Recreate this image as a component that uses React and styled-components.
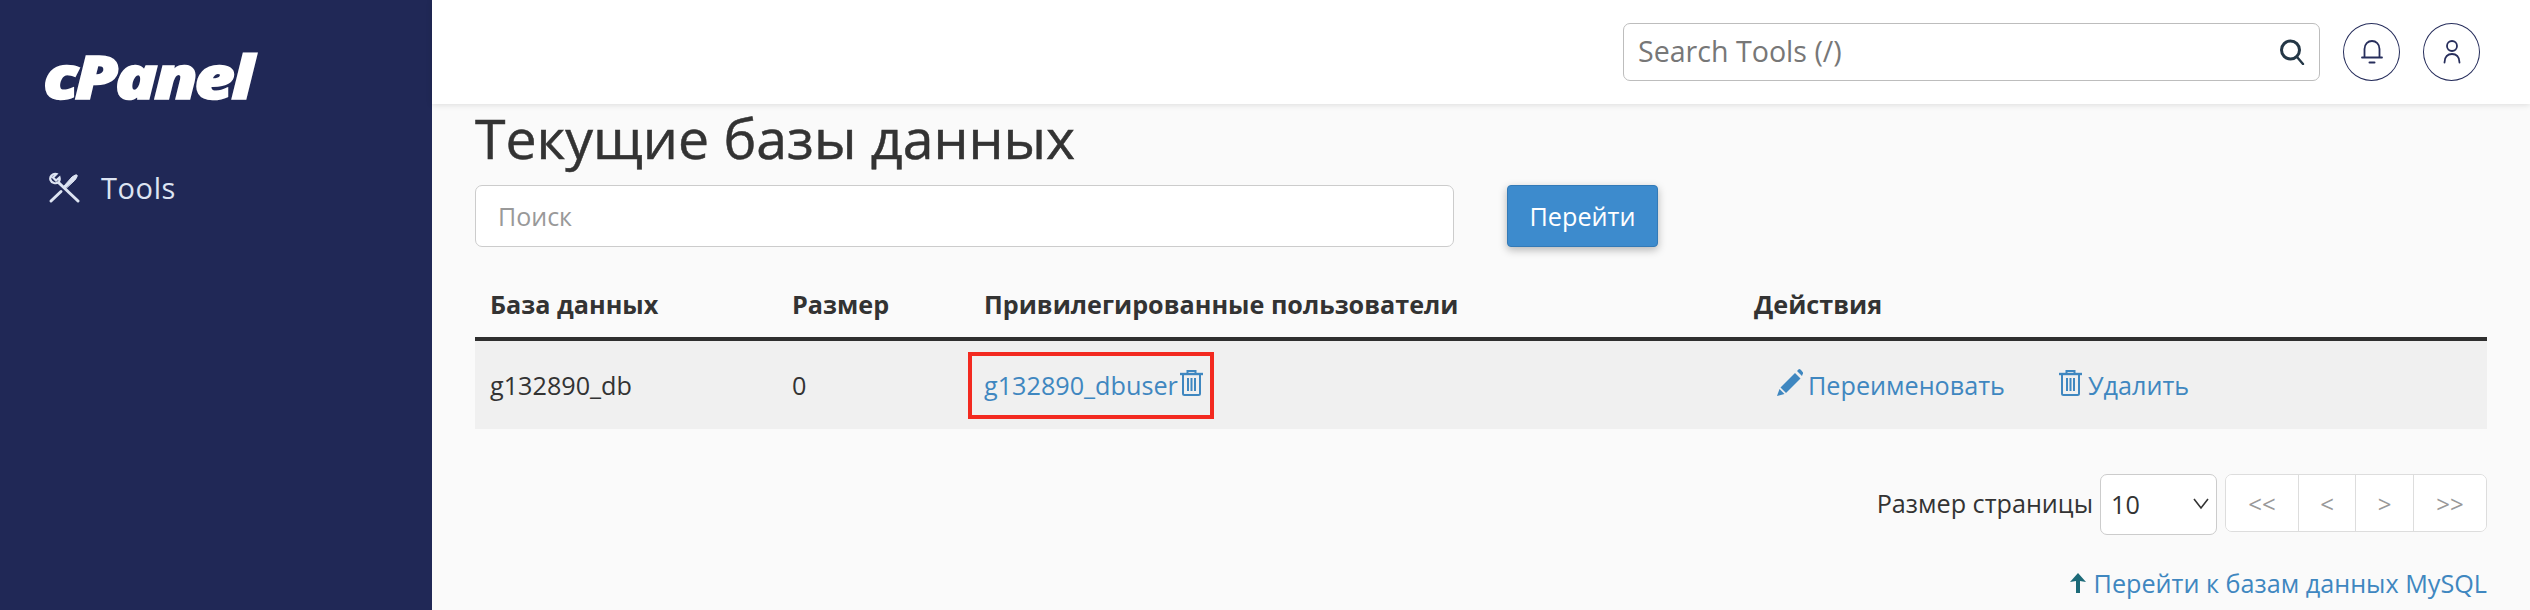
import styled, { createGlobalStyle } from "styled-components";

const GlobalStyle = createGlobalStyle`
  html, body {
    margin: 0;
    padding: 0;
    height: 100%;
    background: #fafafa;
    overflow: hidden;
  }
  body {
    font-family: "Open Sans", "Noto Sans", sans-serif;
    color: #333;
  }
  * { box-sizing: border-box; }
`;

const Page = styled.div`
  display: flex;
  width: 2530px;
  height: 610px;
  overflow: hidden;
`;

const Sidebar = styled.aside`
  flex: 0 0 432px;
  background: #202856;
  display: flex;
  flex-direction: column;
  padding: 43px 0 0 43px;
`;

const Logo = styled.div`
  font-family: "Open Sans", sans-serif;
  font-size: 60px;
  line-height: 66px;
  font-weight: 800;
  font-style: italic;
  letter-spacing: -3px;
  color: #fff;
  -webkit-text-stroke: 1.5px #fff;
  transform: scaleX(1.17);
  transform-origin: left center;
`;

const NavItem = styled.a`
  display: flex;
  align-items: center;
  gap: 21px;
  margin: 59px 0 0 5px;
  color: #dde4f2;
  font-size: 29px;
  line-height: 40px;
  letter-spacing: 0.6px;
`;

const Main = styled.main`
  flex: 1;
  min-width: 0;
  display: flex;
  flex-direction: column;
`;

const Topbar = styled.header`
  flex: 0 0 104px;
  background: #fff;
  box-shadow: 0 1px 6px rgba(0, 0, 0, 0.12);
  display: flex;
  align-items: center;
  justify-content: flex-end;
  gap: 23px;
  padding: 0 50px 0 0;
  position: relative;
`;

const ToolSearch = styled.div`
  width: 697px;
  height: 58px;
  border: 1px solid #bdbdbd;
  border-radius: 7px;
  background: #fff;
  display: flex;
  align-items: center;
  padding: 0 14px 0 14px;
`;

const ToolInput = styled.input`
  flex: 1;
  min-width: 0;
  border: 0;
  outline: 0;
  background: transparent;
  font-family: inherit;
  font-size: 28.6px;
  padding: 0 0 4px;
  color: #333;
  &::placeholder { color: #777; opacity: 1; }
`;

const RoundButton = styled.button`
  width: 57px;
  height: 58px;
  border: 1.5px solid #272e5c;
  border-radius: 50%;
  background: #fff;
  padding: 0;
  display: flex;
  align-items: center;
  justify-content: center;
`;

const Content = styled.div`
  flex: 1;
  padding: 0 43px;
  min-height: 0;
`;

const Title = styled.h1`
  margin: -2px 0 0;
  font-size: 55.4px;
  line-height: 72px;
  font-weight: 400;
  color: #333;
  -webkit-text-stroke: 0.5px #333;
`;

const SearchRow = styled.div`
  display: flex;
  gap: 53px;
  margin-top: 11px;
`;

const SearchInput = styled.input`
  width: 979px;
  height: 62px;
  border: 1px solid #ccc;
  border-radius: 7px;
  background: #fff;
  outline: 0;
  padding: 0 22px;
  font-family: inherit;
  font-size: 25px;
  &::placeholder { color: #999; opacity: 1; }
`;

const GoButton = styled.button`
  width: 151px;
  height: 62px;
  border: 1px solid #337ab7;
  border-radius: 4px;
  background: #3d8bcd;
  box-shadow: 0 3px 8px rgba(0, 0, 0, 0.28);
  color: #fff;
  font-family: inherit;
  font-size: 25.2px;
`;

const Table = styled.table`
  width: 2012px;
  margin-top: 24px;
  border-collapse: collapse;
  table-layout: fixed;
  font-size: 25.2px;
`;

const HeadCell = styled.th`
  width: ${(p) => p.$w}px;
  height: 68px;
  padding: 0 15px;
  text-align: left;
  font-weight: 700;
  color: #333;
  border-bottom: 4px solid #2f2f2f;
`;

const Row = styled.tr`
  background: #f0f0f0;
`;

const Cell = styled.td`
  height: 90px;
  padding: 0 15px;
  color: #333;
`;

const UserCell = styled(Cell)`
  padding: 0;
`;

const HighlightBox = styled.div`
  display: inline-flex;
  align-items: center;
  width: 246px;
  height: 67px;
  margin-left: -1px;
  padding-left: 12px;
  border: 4px solid #f32a20;
`;

const Link = styled.a`
  display: inline-flex;
  align-items: center;
  color: #3f87c0;
  white-space: nowrap;
  gap: ${(p) => p.$gap || 0}px;
`;

const Actions = styled.div`
  display: flex;
  align-items: center;
  gap: 54px;
  padding-left: 23px;
`;

const Pager = styled.div`
  display: flex;
  align-items: flex-start;
  justify-content: flex-end;
  margin-top: 45px;
  font-size: 25.2px;
`;

const PagerLabel = styled.span`
  line-height: 58px;
  margin-right: 7px;
  color: #333;
`;

const SelectWrap = styled.div`
  position: relative;
  margin-right: 8px;
`;

const PageSelect = styled.select`
  appearance: none;
  width: 117px;
  height: 61px;
  border: 1px solid #ccc;
  border-radius: 7px;
  background: #fff;
  padding: 0 10px 2px;
  font-family: inherit;
  font-size: 25.2px;
  color: #333;
`;

const Caret = styled.svg`
  position: absolute;
  right: 7px;
  top: 24px;
  pointer-events: none;
`;

const PageGroup = styled.div`
  display: flex;
  height: 58px;
  border: 1px solid #ddd;
  border-radius: 7px;
  overflow: hidden;
  background: #fff;
`;

const PageButton = styled.button`
  width: ${(p) => p.$w}px;
  height: 100%;
  border: 0;
  border-left: ${(p) => (p.$first ? "0" : "1px solid #ddd")};
  background: #fff;
  color: #999;
  font-family: inherit;
  font-size: 24px;
  padding: 0;
`;

const BackRow = styled.div`
  display: flex;
  justify-content: flex-end;
  margin-top: 31px;
  font-size: 25.2px;
  line-height: 34px;
`;

const LinkIcon = styled.svg`
  flex: none;
  margin-top: -5px;
  margin-left: ${(p) => p.$left || 0}px;
`;

const ToolsIcon = () => (
  <svg width="32" height="32" viewBox="0 0 32 32" fill="none" stroke="#dde4f2" strokeWidth="3" strokeLinecap="round">
    <path d="M3 29 L13 19.500" />
    <path d="M11 11 L30 29" />
    <path d="M8.500 2 L5 5.500 L8 8.500 L11.500 5.500 C12.500 9.500 9.500 12 6 11 C2.500 10 1 6.500 3.500 3.500 C5 2 7 1.500 8.500 2 Z" strokeWidth="2.200" />
    <path d="M18 16 L16 14 L24 5 Q28 2 29 3 Q30 4 27 8 Z" fill="#dde4f2" strokeWidth="1" />
  </svg>
);

const SearchIcon = () => (
  <svg width="26" height="26" viewBox="0 0 26 26" fill="none" stroke="#243746" strokeLinecap="round">
    <circle cx="11.5" cy="11" r="9" strokeWidth="3" />
    <path d="M18 18 L24 25" strokeWidth="2.4" />
  </svg>
);

const BellIcon = () => (
  <svg width="22" height="24" viewBox="0 0 22 24" fill="none" stroke="#272e5c" strokeWidth="1.8" strokeLinecap="round">
    <path d="M3.500 17 V9 C3.500 4 7 1 11 1 C15 1 18.500 4 18.500 9 V17" />
    <path d="M1 17.500 H21" />
    <path d="M8.500 22.500 H13.500" strokeWidth="2" />
  </svg>
);

const UserIcon = () => (
  <svg width="18" height="24" viewBox="0 0 18 24" fill="none" stroke="#272e5c" strokeWidth="1.8" strokeLinecap="round">
    <circle cx="9" cy="6" r="5" />
    <path d="M1.500 22.500 C1.500 16.500 5 14 9 14 C13 14 16.500 16.500 16.500 22.500" />
  </svg>
);

const TrashIcon = ({ left }) => (
  <LinkIcon $left={left} width="23" height="27" viewBox="0 0 23 27" fill="none" stroke="#3f87c0" strokeWidth="2">
    <path d="M0 5 H23" strokeWidth="2.4" />
    <path d="M7.5 5 V2 H15.5 V5" />
    <path d="M3 5 V24.5 Q3 26 4.5 26 H18.5 Q20 26 20 24.5 V5" />
    <path d="M8 9 V22 M11.5 9 V22 M15 9 V22" />
  </LinkIcon>
);

const PencilIcon = () => (
  <LinkIcon width="26" height="27" viewBox="0 0 26 27" fill="#3f87c0">
    <path d="M0 27 L2.500 20 L7.500 25 Z" />
    <path d="M3.500 18.500 L18 4 L23.500 9.500 L9 24 Z" />
    <path d="M20 2 L22 0 Q23 0 24 1 L26 3.500 Q26.500 4.500 25.500 5.500 L25 7 Z" />
  </LinkIcon>
);

const ArrowIcon = () => (
  <svg width="16" height="20" viewBox="0 0 16 20" fill="#1c6a78">
    <path d="M8 0 L16 9 L10 8 V20 H6 V8 L0 9 Z" />
  </svg>
);

const App = () => {
  return (
    <Page>
      <GlobalStyle />
      <Sidebar>
        <Logo>cPanel</Logo>
        <NavItem>
          <ToolsIcon />
          Tools
        </NavItem>
      </Sidebar>
      <Main>
        <Topbar>
          <ToolSearch>
            <ToolInput placeholder="Search Tools (/)" />
            <SearchIcon />
          </ToolSearch>
          <RoundButton><BellIcon /></RoundButton>
          <RoundButton><UserIcon /></RoundButton>
        </Topbar>
        <Content>
          <Title>Текущие базы данных</Title>
          <SearchRow>
            <SearchInput placeholder="Поиск" />
            <GoButton>Перейти</GoButton>
          </SearchRow>
          <Table>
            <thead>
              <tr>
                <HeadCell $w={302}>База данных</HeadCell>
                <HeadCell $w={192}>Размер</HeadCell>
                <HeadCell $w={770}>Привилегированные пользователи</HeadCell>
                <HeadCell $w={748}>Действия</HeadCell>
              </tr>
            </thead>
            <tbody>
              <Row>
                <Cell>g132890_db</Cell>
                <Cell>0</Cell>
                <UserCell>
                  <HighlightBox>
                    <Link>g132890_dbuser<TrashIcon left={2} /></Link>
                  </HighlightBox>
                </UserCell>
                <Cell>
                  <Actions>
                    <Link $gap={5}><PencilIcon />Переименовать</Link>
                    <Link $gap={6}><TrashIcon />Удалить</Link>
                  </Actions>
                </Cell>
              </Row>
            </tbody>
          </Table>
          <Pager>
            <PagerLabel>Размер страницы</PagerLabel>
            <SelectWrap>
              <PageSelect defaultValue="10">
                <option>10</option>
                <option>25</option>
                <option>50</option>
              </PageSelect>
              <Caret width="18" height="12" viewBox="0 0 18 12" fill="none" stroke="#333" strokeWidth="1.6">
                <path d="M2 1 L9 10 L16 1" />
              </Caret>
            </SelectWrap>
            <PageGroup>
              <PageButton $first $w={72}>&lt;&lt;</PageButton>
              <PageButton $w={57}>&lt;</PageButton>
              <PageButton $w={58}>&gt;</PageButton>
              <PageButton $w={73}>&gt;&gt;</PageButton>
            </PageGroup>
          </Pager>
          <BackRow>
            <Link $gap={8}><ArrowIcon />Перейти к базам данных MySQL</Link>
          </BackRow>
        </Content>
      </Main>
    </Page>
  );
};

export default App;
